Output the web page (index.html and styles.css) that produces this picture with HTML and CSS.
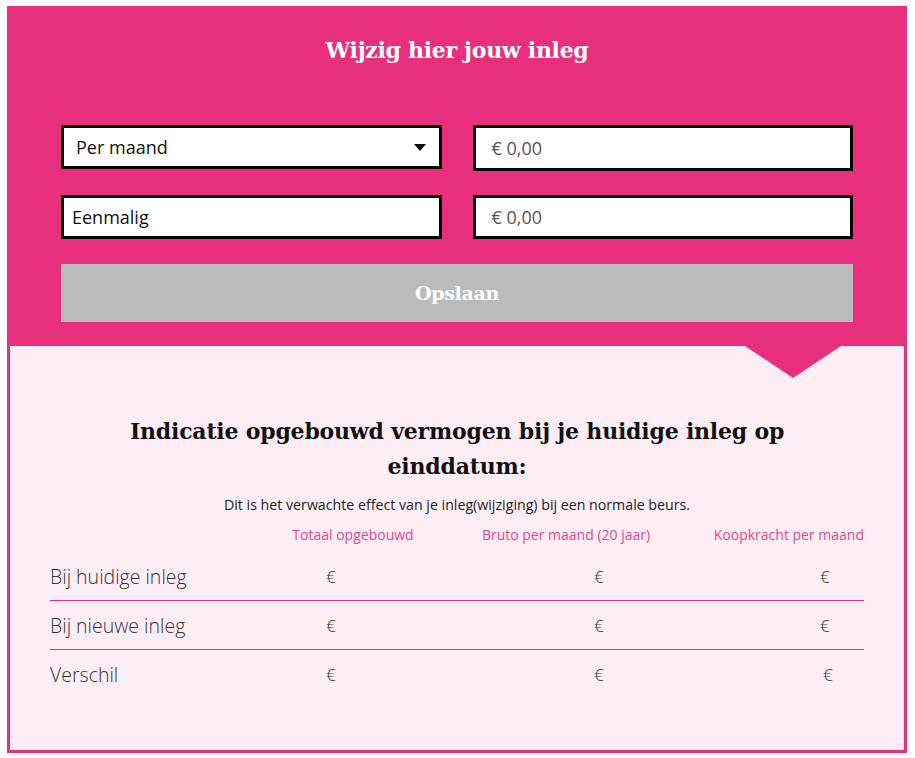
FILE: index.html
```html
<!DOCTYPE html>
<html lang="nl">
<head>
<meta charset="utf-8">
<title>Wijzig inleg</title>
<link rel="stylesheet" href="styles.css">
</head>
<body>
<div class="widget">
  <section class="top">
    <h1 class="top-title">Wijzig hier jouw inleg</h1>
    <div class="fields">
      <div class="field select">
        <span>Per maand</span>
        <svg class="caret" width="12" height="7" viewBox="0 0 12 7"><path d="M0 0h12L6 7z" fill="#000"/></svg>
      </div>
      <div class="field amount tall"><span>€ 0,00</span></div>
      <div class="field plain"><span>Eenmalig</span></div>
      <div class="field amount"><span>€ 0,00</span></div>
    </div>
    <button class="save" type="button">Opslaan</button>
  </section>
  <section class="result">
    <span class="pointer"></span>
    <h2 class="result-title">Indicatie opgebouwd vermogen bij je huidige inleg op<br>einddatum:</h2>
    <p class="sub">Dit is het verwachte effect van je inleg(wijziging) bij een normale beurs.</p>
    <div class="table">
      <div class="row head">
        <div class="c label"></div>
        <div class="c c1">Totaal opgebouwd</div>
        <div class="c c2">Bruto per maand (20 jaar)</div>
        <div class="c c3">Koopkracht per maand</div>
      </div>
      <div class="row line">
        <div class="c label">Bij huidige inleg</div>
        <div class="c v1">€</div>
        <div class="c v2">€</div>
        <div class="c v3">€</div>
      </div>
      <div class="row line">
        <div class="c label">Bij nieuwe inleg</div>
        <div class="c v1">€</div>
        <div class="c v2">€</div>
        <div class="c v3">€</div>
      </div>
      <div class="row">
        <div class="c label">Verschil</div>
        <div class="c v1">€</div>
        <div class="c v2">€</div>
        <div class="c v3 shift">€</div>
      </div>
    </div>
  </section>
</div>
</body>
</html>
```
FILE: styles.css
```css
* { box-sizing: border-box; }
html, body { margin: 0; padding: 0; background: #fff; }
body { font-family: "Open Sans", Lato, sans-serif; }

.widget {
  width: 900px;
  margin: 6px 0 0 7px;
}

.top {
  background: #e82f7e;
  padding: 29px 54px 24px;
}
.top-title {
  margin: 0;
  text-align: center;
  color: #fff;
  font-family: "DejaVu Serif", serif;
  font-weight: bold;
  font-size: 22px;
  line-height: 30px;
  letter-spacing: -0.3px;
}

.fields {
  margin-top: 60px;
  display: grid;
  grid-template-columns: 1fr 1fr;
  column-gap: 31px;
  row-gap: 24px;
  align-items: start;
}
.field {
  height: 44px;
  background: #fff;
  border: 3px solid #000;
  display: flex;
  align-items: center;
  font-size: 18px;
  color: #111;
}
.field.tall { height: 46px; }
.select { padding: 0 13px 0 12px; justify-content: space-between; }
.plain { padding: 0 8px; }
.amount { padding: 0 16px; color: #555; }
.caret { display: block; }

.save {
  display: block;
  width: 100%;
  height: 58px;
  margin-top: 25px;
  border: 0;
  background: #bbbbbb;
  color: #fff;
  font-family: "DejaVu Serif", serif;
  font-weight: bold;
  font-size: 19px;
  letter-spacing: -0.3px;
}

.result {
  position: relative;
  background: #fdeef6;
  border: 3px solid #e82f7e;
  border-top: 0;
  padding: 68px 40px 51px;
}
.pointer {
  position: absolute;
  top: 0;
  right: 63px;
  width: 0;
  height: 0;
  border-left: 48px solid transparent;
  border-right: 48px solid transparent;
  border-top: 32px solid #e82f7e;
}
.result-title {
  margin: 0;
  text-align: center;
  font-family: "DejaVu Serif", serif;
  font-weight: bold;
  font-size: 22px;
  line-height: 35px;
  color: #111;
  letter-spacing: -0.2px;
}
.sub {
  margin: 11px 0 0;
  text-align: center;
  font-size: 14.2px;
  line-height: 20px;
  color: #222;
}

.table { margin-top: 10px; }
.row {
  display: grid;
  grid-template-columns: 190px 226px 200px 198px;
  align-items: center;
  height: 49px;
}
.row.head { height: 20px; margin-bottom: 7px; }
.row.line { border-bottom: 1px solid #e82f7e; }
.head .c { color: #e8478d; font-size: 14px; line-height: 20px; }
.head .c1, .head .c2 { text-align: center; }
.head .c3 { text-align: right; }
.label { font-size: 19.5px; font-weight: 300; color: #333; }
.v1, .v2, .v3 { font-size: 17px; font-weight: 300; color: #333; }
.v1 { padding-left: 86px; }
.v2 { padding-left: 128px; }
.v3 { padding-left: 154px; }
.v3.shift { padding-left: 157px; }
```
